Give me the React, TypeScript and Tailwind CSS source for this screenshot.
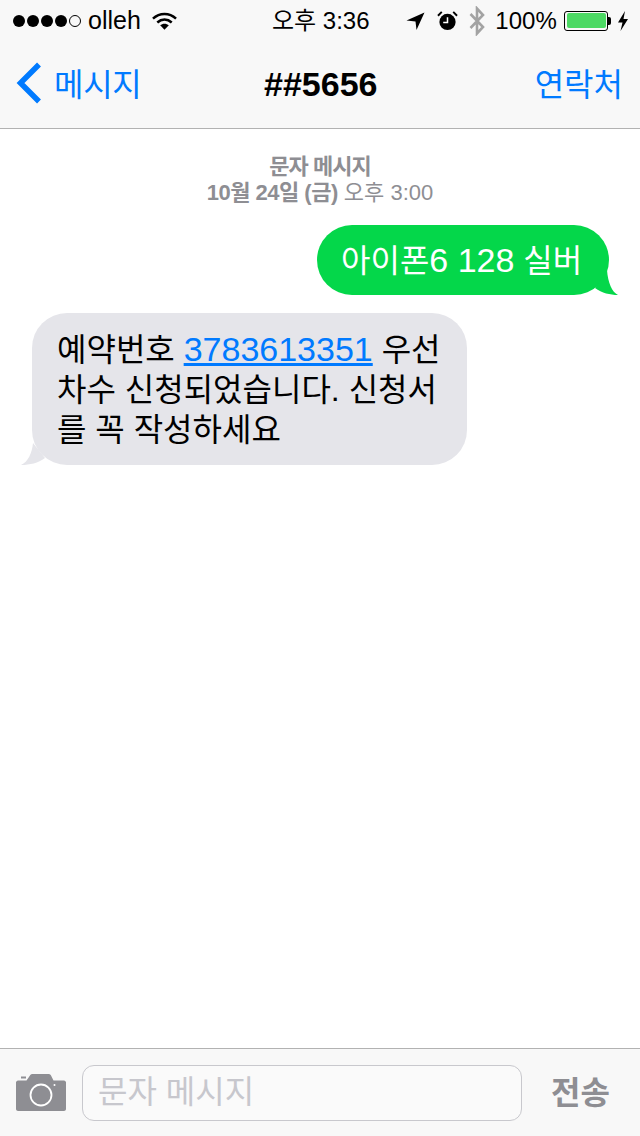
import { useState } from "react";

const font = "font-['Liberation_Sans','Noto_Sans_CJK_KR',sans-serif]";

function Signal() {
  return (
    <div className="flex items-center gap-[2px]">
      {[0, 1, 2, 3].map((i) => (
        <span key={i} className="h-[12px] w-[12px] rounded-full bg-black" />
      ))}
      <span className="h-[12px] w-[12px] rounded-full border border-black" />
    </div>
  );
}

function Wifi() {
  return (
    <svg width="25" height="20" viewBox="0 0 26 20">
      <path d="M1 7.500C8 1 18 1 25 7.500" fill="none" stroke="#000" strokeWidth="2.600" />
      <path d="M5.500 11.500C10 7.500 16 7.500 20.500 11.500" fill="none" stroke="#000" strokeWidth="2.600" />
      <path d="M8.500 14.500C11 12.200 15 12.200 17.500 14.500L13 19Z" fill="#000" />
    </svg>
  );
}

function StatusIcons() {
  return (
    <div className="flex items-center">
      <svg width="20" height="20" viewBox="0 0 20 20" className="mr-[11px]">
        <path d="M0.500 9.500L18.500 1.500L10.500 19L9.500 10.500Z" fill="#000" />
      </svg>
      <svg width="21" height="21" viewBox="0 0 22 22" className="mr-[11px]">
        <circle cx="11" cy="12.500" r="8.500" fill="#000" />
        <path d="M11 7.500V13H6.500" fill="none" stroke="#fff" strokeWidth="1.600" />
        <path d="M1 6L5 2M21 6L17 2" stroke="#000" strokeWidth="2" />
      </svg>
      <svg width="16" height="30" viewBox="0 0 16 30" className="mr-[10px]">
        <path d="M1.500 8L14 21L8 27.500V2.500L14 9L1.500 22" fill="none" stroke="#a3a3a3" strokeWidth="2.600" />
      </svg>
      <span className="mr-[7px] text-[24px] leading-none tracking-[0.1px] text-black">100%</span>
      <div className="relative mr-[9px] h-[20px] w-[44px] rounded-[3px] border border-black p-[1.500px]">
        <div className="h-full w-full rounded-[2px] bg-[#4cd964]" />
        <span className="absolute top-[5px] -right-[4px] h-[8px] w-[3px] rounded-r-[2px] bg-black" />
      </div>
      <svg width="12" height="20" viewBox="0 0 12 20">
        <path d="M8 0L1 11.500H5.500L3.500 20L11 8H6.500Z" fill="#000" />
      </svg>
    </div>
  );
}

function Camera() {
  return (
    <svg width="50" height="37" viewBox="0 0 50 37">
      <path
        d="M2 6.500H10.500L14 1.500C14.500 0.500 15.500 0 16.500 0H32.500C33.500 0 34.500 0.500 35 1.500L37.500 6.500H48C49 6.500 50 7.500 50 8.500V35C50 36 49 37 48 37H2C1 37 0 36 0 35V8.500C0 7.500 1 6.500 2 6.500Z"
        fill="#8e8e93"
      />
      <circle cx="25" cy="21" r="10.500" fill="none" stroke="#fff" strokeWidth="1.800" />
      <circle cx="38.500" cy="11" r="1" fill="#fff" />
      <rect x="5" y="2.500" width="5" height="2" fill="#8e8e93" />
    </svg>
  );
}

export default function App() {
  const [draft, setDraft] = useState("");

  return (
    <div className={`flex h-[1136px] w-[640px] flex-col overflow-hidden bg-white ${font}`}>
      <header className="h-[129px] shrink-0 border-b border-[#b2b2b2] bg-[#f8f8f8]">
        <div className="relative flex h-[41px] items-center justify-between pr-[11px] pl-[13px]">
          <div className="flex items-center">
            <Signal />
            <span className="ml-[7px] text-[25px] leading-none text-black">olleh</span>
            <span className="ml-[11px]">
              <Wifi />
            </span>
          </div>
          <span className="absolute top-[8px] left-[272px] text-[24px] leading-[26px] text-black">오후 3:36</span>
          <StatusIcons />
        </div>
        <div className="relative flex h-[87px] items-center justify-between pr-[17px] pb-[4px] pl-[16px]">
          <div className="flex items-center">
            <svg width="26" height="42" viewBox="0 0 26 42">
              <path d="M23 2.500L4.500 21L23 39.500" fill="none" stroke="#007aff" strokeWidth="5.500" />
            </svg>
            <span className="mt-[4px] ml-[12px] text-[32px] leading-none tracking-[-0.3px] text-[#007aff]">메시지</span>
          </div>
          <h1 className="absolute top-[24px] left-[264px] text-[34px] leading-[38px] font-bold text-black">##5656</h1>
          <span className="mt-[4px] text-[32px] leading-none text-[#007aff]">연락처</span>
        </div>
      </header>

      <main className="flex min-h-0 flex-1 flex-col">
        <div className="flex flex-col items-center pt-[25px] text-[#8e8e93]">
          <p className="text-[22px] leading-[26px] font-bold tracking-[-1px]">문자 메시지</p>
          <p className="text-[22px] leading-[26px]">
            <span className="font-bold tracking-[-0.5px]">10월 24일 (금)</span> 오후 3:00
          </p>
        </div>

        <div className="mt-[19px] flex justify-end pr-[31px]">
          <div className="relative flex h-[70px] w-[292px] items-center rounded-[35px] bg-[#04d74a] pl-[24px] text-[32px] leading-[38px] whitespace-nowrap text-white">
            <span>
              아이폰<span className="text-[34px]">6 128</span> 실버
            </span>
            <svg width="36" height="30" viewBox="0 0 36 30" className="absolute right-[-11px] bottom-0">
              <path d="M23 5C24 18 28 27 34 30C26 30 18 28 11 23Z" fill="#04d74a" />
            </svg>
          </div>
        </div>

        <div className="mt-[18px] pl-[32px]">
          <div className="relative h-[152px] w-[435px] rounded-[35px] bg-[#e5e5ea] pt-[16px] pl-[25px] text-[32px] leading-[40px] text-black">
            <p className="whitespace-nowrap">
              예약번호 <a className="text-[34px] text-[#007aff] underline">3783613351</a> 우선
            </p>
            <p className="whitespace-nowrap">차수 신청되었습니다. 신청서</p>
            <p className="whitespace-nowrap">를 꼭 작성하세요</p>
            <svg width="36" height="30" viewBox="0 0 36 30" className="absolute bottom-0 left-[-11px]">
              <path d="M12 8C11 18 7 27 0 30C9 30 17 28 24 23Z" fill="#e5e5ea" />
            </svg>
          </div>
        </div>
      </main>

      <footer className="flex h-[88px] shrink-0 items-center border-t border-[#b2b2b2] bg-[#f8f8f8] pl-[16px]">
        <Camera />
        <input
          value={draft}
          onChange={(e) => setDraft(e.target.value)}
          placeholder="문자 메시지"
          className="ml-[16px] h-[56px] w-[440px] rounded-[12px] border border-[#c8c8cd] bg-[#fafafa] pl-[15px] text-[32px] outline-none placeholder:text-[#c7c7cd]"
        />
        <span className="ml-[29px] text-[32px] leading-none font-bold text-[#8e8e93]">전송</span>
      </footer>
    </div>
  );
}
